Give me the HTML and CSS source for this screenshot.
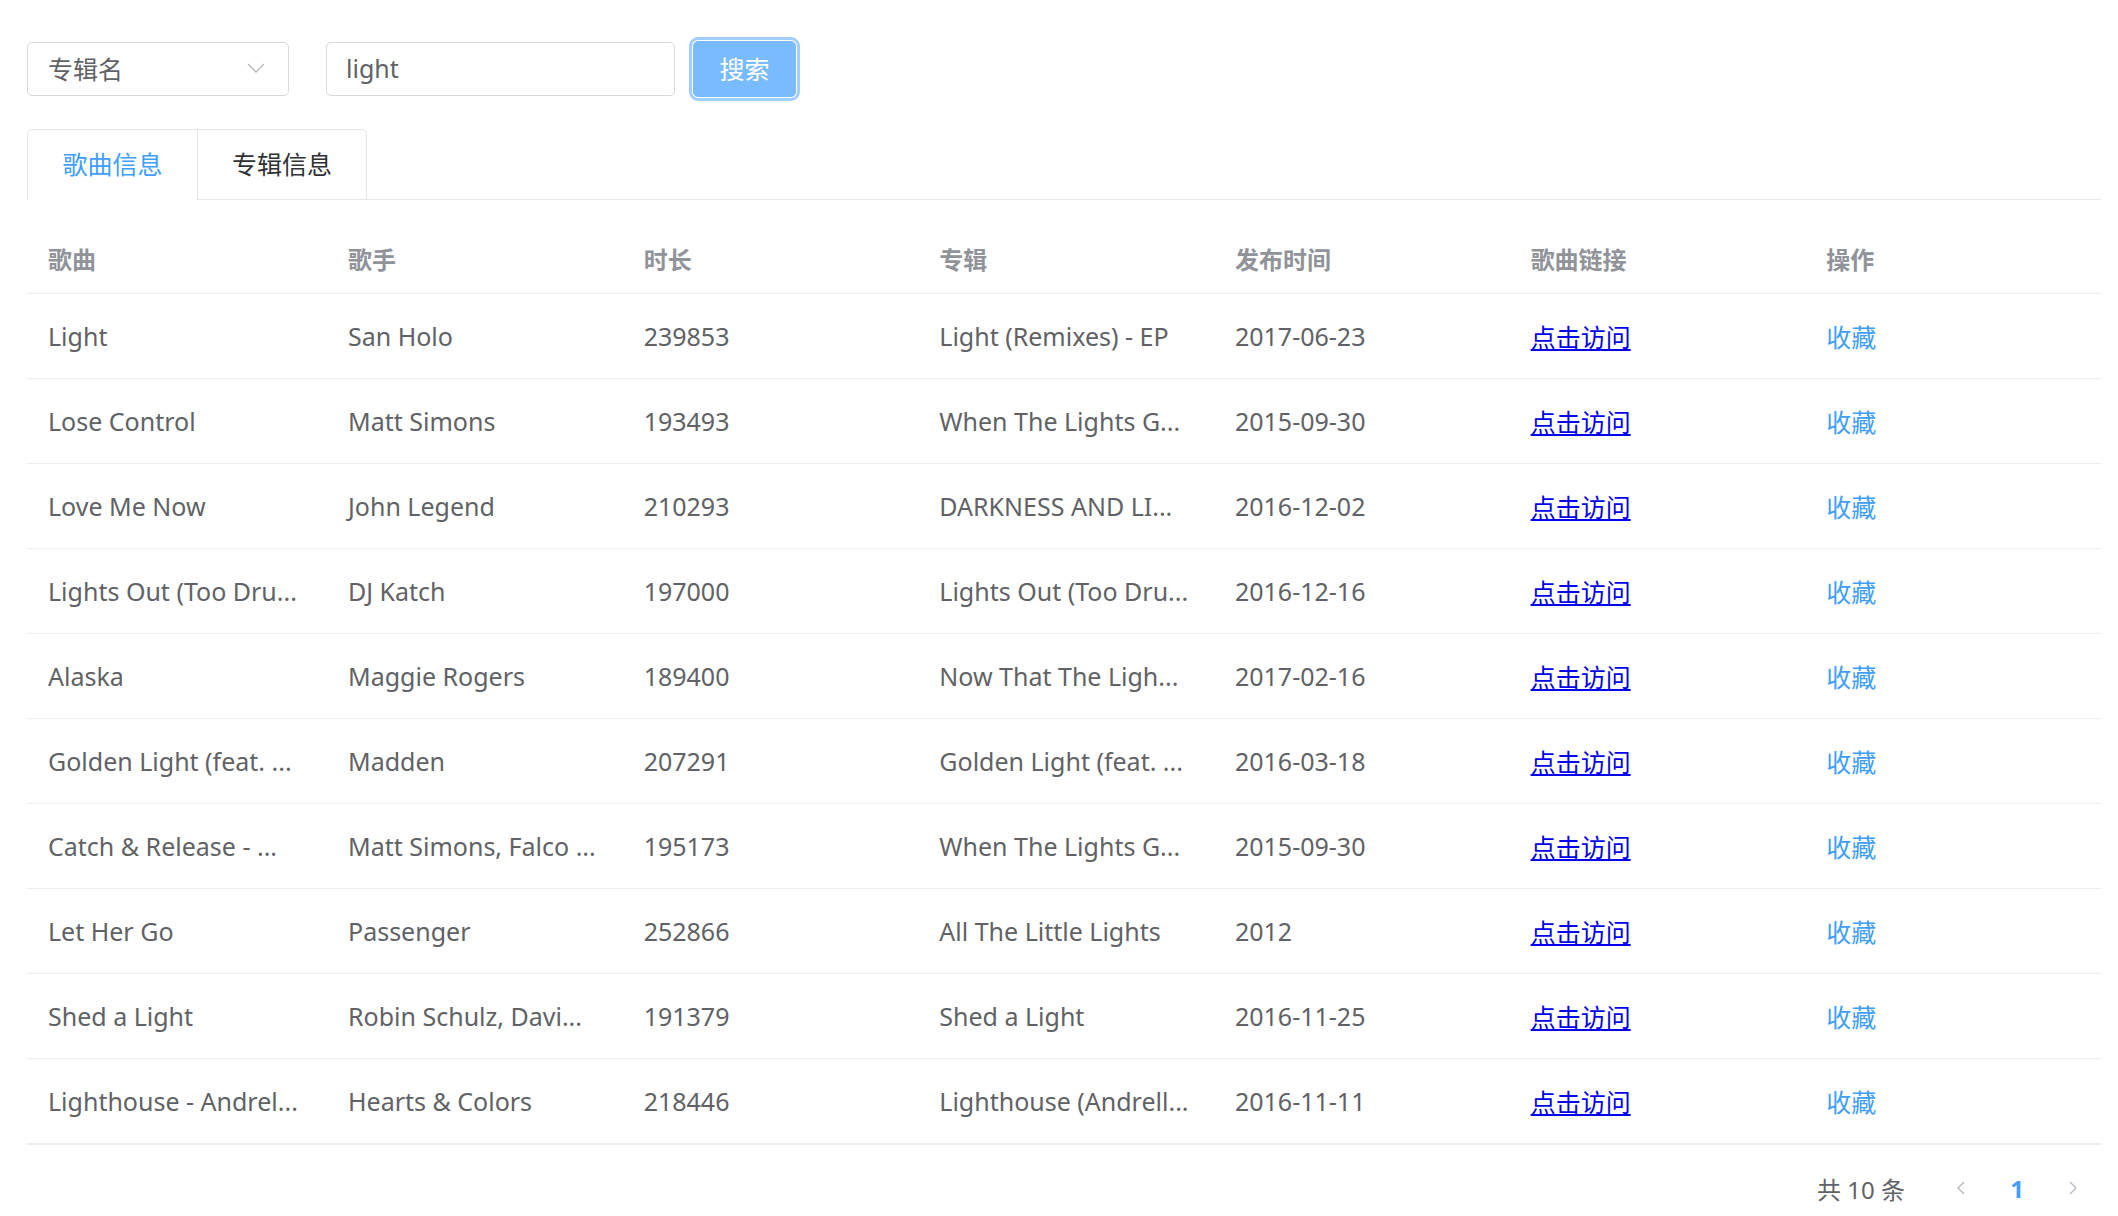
FILE: index.html
```html
<!DOCTYPE html>
<html lang="zh-CN">
<head>
<meta charset="utf-8">
<title>歌曲搜索</title>
<link rel="stylesheet" href="styles.css">
</head>
<body>
<div class="page">
  <div class="toolbar">
    <div class="select">
      <span>专辑名</span>
      <svg class="arrow" width="18" height="10" viewBox="0 0 18 10"><polyline points="1,1 9,9 17,1" fill="none" stroke="#b4b8bf" stroke-width="1.4"/></svg>
    </div>
    <div class="input">light</div>
    <button class="btn">搜索</button>
  </div>

  <div class="tabs-header">
    <div class="tabs-nav">
      <div class="tab active">歌曲信息</div>
      <div class="tab">专辑信息</div>
    </div>
  </div>

  <div class="table-wrap">
    <table class="table">
      <colgroup>
        <col class="col-first">
        <col><col><col><col><col><col>
      </colgroup>
      <thead>
        <tr><th>歌曲</th><th>歌手</th><th>时长</th><th>专辑</th><th>发布时间</th><th>歌曲链接</th><th>操作</th></tr>
      </thead>
      <tbody>
        <tr><td>Light</td><td>San Holo</td><td>239853</td><td>Light (Remixes) - EP</td><td>2017-06-23</td><td class="cjk"><a href="#">点击访问</a></td><td class="cjk fav">收藏</td></tr>
        <tr><td>Lose Control</td><td>Matt Simons</td><td>193493</td><td>When The Lights G...</td><td>2015-09-30</td><td class="cjk"><a href="#">点击访问</a></td><td class="cjk fav">收藏</td></tr>
        <tr><td>Love Me Now</td><td>John Legend</td><td>210293</td><td>DARKNESS AND LI...</td><td>2016-12-02</td><td class="cjk"><a href="#">点击访问</a></td><td class="cjk fav">收藏</td></tr>
        <tr><td>Lights Out (Too Dru...</td><td>DJ Katch</td><td>197000</td><td>Lights Out (Too Dru...</td><td>2016-12-16</td><td class="cjk"><a href="#">点击访问</a></td><td class="cjk fav">收藏</td></tr>
        <tr><td>Alaska</td><td>Maggie Rogers</td><td>189400</td><td>Now That The Ligh...</td><td>2017-02-16</td><td class="cjk"><a href="#">点击访问</a></td><td class="cjk fav">收藏</td></tr>
        <tr><td>Golden Light (feat. ...</td><td>Madden</td><td>207291</td><td>Golden Light (feat. ...</td><td>2016-03-18</td><td class="cjk"><a href="#">点击访问</a></td><td class="cjk fav">收藏</td></tr>
        <tr><td>Catch &amp; Release - ...</td><td>Matt Simons, Falco ...</td><td>195173</td><td>When The Lights G...</td><td>2015-09-30</td><td class="cjk"><a href="#">点击访问</a></td><td class="cjk fav">收藏</td></tr>
        <tr><td>Let Her Go</td><td>Passenger</td><td>252866</td><td>All The Little Lights</td><td>2012</td><td class="cjk"><a href="#">点击访问</a></td><td class="cjk fav">收藏</td></tr>
        <tr><td>Shed a Light</td><td>Robin Schulz, Davi...</td><td>191379</td><td>Shed a Light</td><td>2016-11-25</td><td class="cjk"><a href="#">点击访问</a></td><td class="cjk fav">收藏</td></tr>
        <tr><td>Lighthouse - Andrel...</td><td>Hearts &amp; Colors</td><td>218446</td><td>Lighthouse (Andrell...</td><td>2016-11-11</td><td class="cjk"><a href="#">点击访问</a></td><td class="cjk fav">收藏</td></tr>
      </tbody>
    </table>
  </div>

  <div class="pagination">
    <span class="total">共 10 条</span>
    <span class="pg-btn"><svg width="8" height="14" viewBox="0 0 8 14"><polyline points="7,1 1,7 7,13" fill="none" stroke="#b4b8bf" stroke-width="1.3"/></svg></span>
    <span class="pg-btn current">1</span>
    <span class="pg-btn"><svg width="8" height="14" viewBox="0 0 8 14"><polyline points="1,1 7,7 1,13" fill="none" stroke="#b4b8bf" stroke-width="1.3"/></svg></span>
  </div>
</div>
</body>
</html>
```
FILE: styles.css
```css
html, body {
  margin: 0;
  padding: 0;
  background: #ffffff;
}

body {
  font-family: "Noto Sans", "Noto Sans CJK SC", sans-serif;
  color: #606266;
}

.page {
  padding: 42px 17px 0 27px;
}

.toolbar {
  display: flex;
  align-items: center;
  height: 54px;
}

.select {
  box-sizing: border-box;
  width: 262px;
  height: 54px;
  border: 1px solid #d6d9e0;
  border-radius: 5px;
  display: flex;
  align-items: center;
  justify-content: space-between;
  padding: 0 23px 2px 20px;
  font-family: "Noto Sans CJK SC", sans-serif;
  font-size: 25px;
  color: #606266;
}

.arrow {
  display: block;
}

.input {
  box-sizing: border-box;
  width: 349px;
  height: 54px;
  margin-left: 37px;
  border: 1px solid #d6d9e0;
  border-radius: 5px;
  padding: 0 19px 3px;
  display: flex;
  align-items: center;
  font-size: 25px;
  color: #606266;
}

.btn {
  box-sizing: border-box;
  width: 103px;
  height: 56px;
  margin-left: 18px;
  background: #79bbff;
  border: 1px solid #79bbff;
  border-radius: 5px;
  outline: 3px solid #a0cfff;
  outline-offset: 1px;
  color: #ffffff;
  font-family: "Noto Sans CJK SC", sans-serif;
  font-size: 25px;
  padding: 0 0 2px;
}

.tabs-header {
  margin-top: 33px;
  display: flex;
  border-bottom: 1px solid #e4e7ed;
}

.tabs-nav {
  display: flex;
  border: 1px solid #e4e7ed;
  border-bottom: none;
  border-radius: 5px 5px 0 0;
}

.tab {
  box-sizing: border-box;
  width: 169px;
  height: 69px;
  line-height: 67px;
  text-align: center;
  font-family: "Noto Sans CJK SC", sans-serif;
  font-size: 25px;
  color: #303133;
}

.tab + .tab {
  border-left: 1px solid #e4e7ed;
}

.tab.active {
  color: #409eff;
  height: 70px;
  margin-bottom: -1px;
  border-bottom: 1px solid #ffffff;
}

.table-wrap {
  margin-top: 29px;
  border-bottom: 1px solid #ebeef5;
}

.table {
  width: 100%;
  table-layout: fixed;
  border-collapse: separate;
  border-spacing: 0;
  font-size: 25px;
}

.table col.col-first {
  width: 300px;
}

.table th {
  height: 58px;
  padding: 0 10px 6px 21px;
  text-align: left;
  font-weight: 700;
  font-size: 24px;
  color: #909399;
  border-bottom: 1px solid #ebeef5;
  font-family: "Noto Sans CJK SC", sans-serif;
  vertical-align: middle;
}

.table td {
  height: 84px;
  padding: 0 10px 0 21px;
  border-bottom: 1px solid #ebeef5;
  color: #606266;
  white-space: nowrap;
  overflow: hidden;
  vertical-align: middle;
}

.table td.cjk {
  font-family: "Noto Sans CJK SC", sans-serif;
  font-size: 25px;
}

.table a {
  color: #0000ee;
  text-decoration: underline;
}

.table td.fav {
  color: #409eff;
}

.pagination {
  margin-top: 23px;
  height: 40px;
  display: flex;
  align-items: center;
  justify-content: flex-end;
}

.total {
  margin-right: 28px;
  font-size: 24px;
  color: #606266;
}

.pg-btn {
  width: 44px;
  height: 40px;
  margin: 0 6px;
  display: flex;
  align-items: center;
  justify-content: center;
  font-size: 24px;
}

.pg-btn.current {
  color: #409eff;
  font-weight: 700;
}
```
